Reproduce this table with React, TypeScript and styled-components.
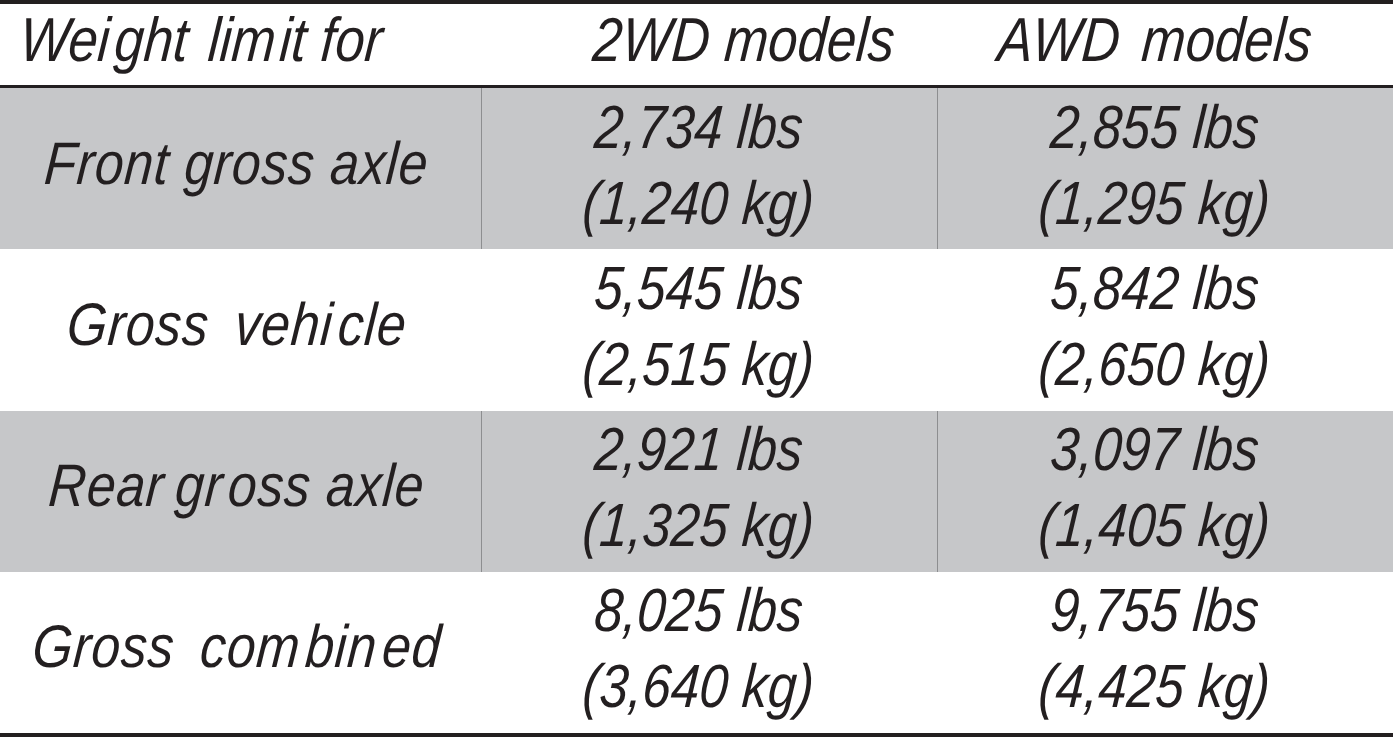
import React from 'react';
import styled, { createGlobalStyle } from 'styled-components';

const GlobalStyle = createGlobalStyle`
  html, body {
    margin: 0;
    padding: 0;
    background: #fff;
  }
  body {
    font-family: "Liberation Sans", Arial, sans-serif;
    color: #231f20;
  }
`;

const Table = styled.div`
  width: 1393px;
  height: 737px;
  box-sizing: border-box;
  border-top: 4px solid #231f20;
  border-bottom: 4px solid #231f20;
  display: flex;
  flex-direction: column;
`;

const HeaderRow = styled.div`
  height: 84px;
  flex: none;
  box-sizing: border-box;
  padding-top: 5px;
  border-bottom: 3px solid #231f20;
  display: grid;
  grid-template-columns: 481px 456px 456px;
  align-items: start;
`;

const HeaderCell = styled.div<{ $indent: number }>`
  padding-left: ${(p) => p.$indent}px;
  white-space: nowrap;
`;

// the print face is a condensed oblique: squeeze and lean Liberation Sans Italic
const HeaderText = styled.span`
  display: inline-block;
  font-style: italic;
  font-size: 62px;
  line-height: 62px;
  transform: scaleX(0.85) skewX(-5deg);
  transform-origin: left center;
`;

const Row = styled.div<{ $shaded?: boolean }>`
  flex: 1 1 0;
  min-height: 0;
  overflow: hidden;
  display: grid;
  grid-template-columns: 481px 456px 456px;
  background: ${(p) => (p.$shaded ? '#c6c7c9' : '#fff')};
`;

const Cell = styled.div<{ $shaded?: boolean; $divider?: boolean }>`
  display: flex;
  flex-direction: column;
  align-items: center;
  justify-content: center;
  padding-bottom: 8px;
  box-sizing: border-box;
  border-left: ${(p) => (p.$divider ? `1px solid ${p.$shaded ? '#8d8e90' : '#fff'}` : 'none')};
  white-space: nowrap;
`;

const Label = styled.span`
  display: inline-block;
  font-style: italic;
  font-size: 60px;
  line-height: 60px;
  letter-spacing: 1px;
  padding-right: 8px;
  margin-bottom: 2px;
  transform: scaleX(0.86) skewX(-5deg);
`;

const Value = styled.span`
  display: inline-block;
  font-style: italic;
  font-size: 61px;
  line-height: 76px;
  padding-right: 26px;
  transform: scaleX(0.84) skewX(-5deg);
`;

// extra spacing the typeset source has inside some words
const Gap = styled.span<{ $w: number }>`
  display: inline-block;
  width: ${(p) => p.$w}px;
`;

// a word space of a given width
const Space = styled.span<{ $w: number }>`
  display: inline-block;
  width: ${(p) => p.$w}px;
  white-space: pre;
  overflow: hidden;
  vertical-align: bottom;
`;

type Weight = { lbs: string; kg: string };

const rows: { label: React.ReactNode; twoWd: Weight; awd: Weight }[] = [
  {
    label: 'Front gross axle',
    twoWd: { lbs: '2,734 lbs', kg: '(1,240 kg)' },
    awd: { lbs: '2,855 lbs', kg: '(1,295 kg)' },
  },
  {
    label: (
      <>
        Gross<Space $w={30}> </Space>vehi<Gap $w={6} />cle
      </>
    ),
    twoWd: { lbs: '5,545 lbs', kg: '(2,515 kg)' },
    awd: { lbs: '5,842 lbs', kg: '(2,650 kg)' },
  },
  {
    label: (
      <>
        Rear<Space $w={13}> </Space>gr<Gap $w={6} />oss axle
      </>
    ),
    twoWd: { lbs: '2,921 lbs', kg: '(1,325 kg)' },
    awd: { lbs: '3,097 lbs', kg: '(1,405 kg)' },
  },
  {
    label: (
      <>
        Gross<Space $w={30}> </Space>com<Gap $w={6} />bin<Gap $w={6} />ed
      </>
    ),
    twoWd: { lbs: '8,025 lbs', kg: '(3,640 kg)' },
    awd: { lbs: '9,755 lbs', kg: '(4,425 kg)' },
  },
];

export default function App() {
  return (
    <>
      <GlobalStyle />
      <Table>
        <HeaderRow>
          <HeaderCell $indent={20}>
            <HeaderText>
              Wei<Gap $w={6} />ght<Space $w={24}> </Space>lim<Gap $w={5} />it for
            </HeaderText>
          </HeaderCell>
          <HeaderCell $indent={112}>
            <HeaderText>2WD models</HeaderText>
          </HeaderCell>
          <HeaderCell $indent={61}>
            <HeaderText>
              AWD<Space $w={26}> </Space>models
            </HeaderText>
          </HeaderCell>
        </HeaderRow>
        {rows.map((r, i) => {
          const shaded = i % 2 === 0;
          return (
            <Row key={i} $shaded={shaded}>
              <Cell>
                <Label>{r.label}</Label>
              </Cell>
              <Cell $shaded={shaded} $divider>
                <Value>{r.twoWd.lbs}</Value>
                <Value>{r.twoWd.kg}</Value>
              </Cell>
              <Cell $shaded={shaded} $divider>
                <Value>{r.awd.lbs}</Value>
                <Value>{r.awd.kg}</Value>
              </Cell>
            </Row>
          );
        })}
      </Table>
    </>
  );
}
